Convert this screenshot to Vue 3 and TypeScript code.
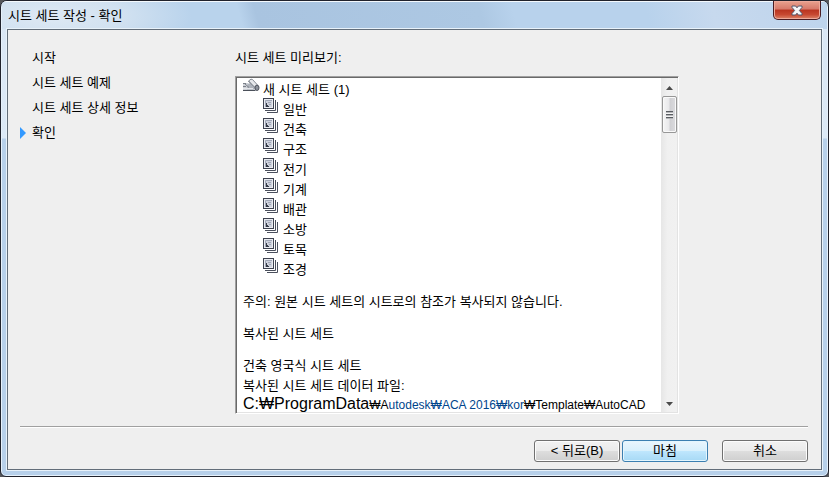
<script setup lang="ts">
import { ref } from 'vue'

interface Step {
  label: string
  current: boolean
}

const steps = ref<Step[]>([
  { label: '시작', current: false },
  { label: '시트 세트 예제', current: false },
  { label: '시트 세트 상세 정보', current: false },
  { label: '확인', current: true },
])

const subsets = ref<string[]>(['일반', '건축', '구조', '전기', '기계', '배관', '소방', '토목', '조경'])
</script>

<template>
  <div class="backdrop">
    <main class="window">
      <header class="titlebar">
        <h1 class="title">시트 세트 작성 - 확인</h1>
        <button class="close" type="button" aria-label="닫기">
          <svg width="12" height="11" viewBox="0 0 12 11" aria-hidden="true">
            <path
              d="M1 1h3.6L6 2.8 7.4 1H11v1.4L8.4 5.5 11 8.6V10H7.4L6 8.2 4.6 10H1V8.6l2.6-3.1L1 2.4z"
              fill="#f6f6f8"
              stroke="#53566b"
              stroke-width="1"
            />
          </svg>
        </button>
      </header>

      <div class="client">
        <div class="content">
          <ol class="steps">
            <li v-for="step in steps" :key="step.label" class="step">
              <span class="marker">
                <svg v-if="step.current" width="7" height="12" viewBox="0 0 7 12" aria-hidden="true">
                  <path d="M0 0l6 6-6 6z" fill="#3399ff" />
                </svg>
              </span>
              <span>{{ step.label }}</span>
            </li>
          </ol>

          <section class="preview">
            <h2 class="preview-label">시트 세트 미리보기:</h2>
            <div class="preview-box">
              <div class="document">
                <div class="row">
                  <svg class="icon" width="17" height="15" viewBox="0 0 17 15" aria-hidden="true">
                    <path d="M0 5h5l8 7H0z" fill="#cfd2d8" />
                    <path d="M5.5 3L8 1.200 9.500 1.500l5 5.500-2 4z" fill="#e6e8eb" stroke="#858a93" />
                    <path d="M4.500 6.500L7 5l5.500 5-2 1.500H4z" fill="#aeb3bb" />
                    <path d="M0 5.500h3M0 8.500h3M1.500 5.500l4.500 4M5.500 3l6.500 6.500" stroke="#7b8089" fill="none" />
                    <path d="M0 10.500h10" stroke="#e4e6ea" fill="none" />
                    <path d="M0 12.500h12.500" stroke="#4b505a" fill="none" />
                    <ellipse cx="14" cy="9.800" rx="2" ry="2.700" fill="#8d929b" stroke="#4b505a" />
                  </svg>
                  <span>새 시트 세트 (1)</span>
                </div>
                <ul class="subsets">
                  <li v-for="name in subsets" :key="name" class="row">
                    <svg class="icon" width="15" height="15" viewBox="0 0 15 15" aria-hidden="true">
                      <path d="M14.500 4v10.500H4" fill="none" stroke="#4a4f5c" />
                      <path d="M12.500 2v10.500H2" fill="none" stroke="#4a4f5c" />
                      <rect x="0.500" y="0.500" width="10" height="10" fill="#e9ebf0" stroke="#3e4350" />
                      <rect x="2" y="2" width="7" height="7" fill="#cdd1dc" />
                      <path d="M2.500 9V2.500H9M5 4.500h3M6 6.500h2" stroke="#a0a6b6" fill="none" />
                      <path d="M3 5h1v2h1v1h1v1H3z" fill="#343947" />
                    </svg>
                    <span>{{ name }}</span>
                  </li>
                </ul>
                <p class="line note">주의: 원본 시트 세트의 시트로의 참조가 복사되지 않습니다.</p>
                <p class="line note">복사된 시트 세트</p>
                <p class="line note">건축 영국식 시트 세트</p>
                <p class="line">복사된 시트 세트 데이터 파일:</p>
                <p class="line path"><span class="root">C:₩ProgramData</span>₩A<span class="linked">utodesk₩ACA 2016₩kor</span>₩Template₩AutoCAD</p>
              </div>
              <div class="scrollbar">
                <button class="arrow" type="button" aria-label="위로 스크롤">
                  <svg width="7" height="4" viewBox="0 0 7 4" aria-hidden="true">
                    <path d="M0 4l3.5-4L7 4z" fill="#4a4a4a" />
                  </svg>
                </button>
                <div class="thumb">
                  <span class="grip"></span>
                </div>
                <button class="arrow down" type="button" aria-label="아래로 스크롤">
                  <svg width="7" height="4" viewBox="0 0 7 4" aria-hidden="true">
                    <path d="M0 0l3.5 4L7 0z" fill="#4a4a4a" />
                  </svg>
                </button>
              </div>
            </div>
          </section>
        </div>

        <footer class="actions">
          <button class="button" type="button">&lt; 뒤로(B)</button>
          <button class="button primary" type="button">마침</button>
          <button class="button cancel" type="button">취소</button>
        </footer>
      </div>
    </main>
  </div>
</template>

<style>
body {
  margin: 0;
}
</style>

<style scoped>
* {
  box-sizing: border-box;
}

.backdrop {
  display: flex;
  min-height: 100vh;
  background: #55565a;
  color: #000;
  font-family: "Liberation Sans", "Noto Sans CJK KR", sans-serif;
  font-size: 13px;
  font-weight: 400;
  line-height: 20px;
}

.window {
  display: flex;
  flex: 1;
  flex-direction: column;
  padding: 0 6px 6px;
  border: 1px solid #20222c;
  border-radius: 7px 7px 6px 6px;
  box-shadow: inset 0 0 0 1px #e6f1fb;
  background:
    linear-gradient(#d9e6f4 0, #dce9f6 137px, transparent 138px),
    #b7d0ea;
  overflow: hidden;
}

.titlebar {
  display: flex;
  justify-content: space-between;
  align-items: flex-start;
  height: 28px;
  margin: 0 -5px;
  padding: 0 6px;
  border-top: 1px solid #f4f9fd;
  background:
    radial-gradient(140px 40px at 50px 14px, rgb(226 235 244 / 90%) 0, rgb(226 235 244 / 60%) 50%, rgb(226 235 244 / 0%) 100%),
    linear-gradient(75deg, #b9d3ec 0, #b9d3ec 29%, #a9c4e0 31%, #adc8e3 58%, #b8d2ec 62%, #b8d2ec 78%, #c7d9ee 86%, #bdd4ec 100%);
}

.title {
  margin: 0;
  padding-top: 4px;
  font-size: 13px;
  font-weight: 400;
}

.close {
  display: flex;
  align-items: center;
  justify-content: center;
  width: 48px;
  height: 19px;
  margin-top: -1px;
  padding: 0;
  border: 1px solid #4a1c22;
  border-top: 0;
  border-radius: 0 0 5px 5px;
  box-shadow: inset 0 0 0 1px #eda99a;
  background: linear-gradient(#e9a28f 0, #d6796a 45%, #b93420 50%, #c74831 75%, #dc8468 100%);
}

.client {
  display: flex;
  flex: 1;
  flex-direction: column;
  padding: 0 13px 7px 12px;
  border: 1px solid #626d79;
  box-shadow: 0 0 0 1px #e8f2fa;
  background: #efefef;
}

.content {
  display: grid;
  flex: 1;
  grid-template-columns: 215px minmax(0, 444px);
  padding-bottom: 12px;
}

.steps {
  margin: 0;
  padding: 15px 0 0;
  list-style: none;
}

.step {
  display: flex;
  align-items: center;
  line-height: 25px;
}

.marker {
  display: flex;
  width: 12px;
}

.preview {
  display: flex;
  flex-direction: column;
}

.preview-label {
  margin: 0;
  padding: 18px 0 8px;
  font-size: 13px;
  font-weight: 400;
}

.preview-box {
  display: flex;
  flex: 1;
  border: 1px solid;
  border-color: #a0a0a0 #fff #fff #a0a0a0;
  box-shadow: inset 1px 1px #696969, inset -1px -1px #e3e3e3;
  padding: 1px 1px 1px 2px;
  background: #fff;
}

.document {
  flex: 1;
  min-width: 0;
  padding: 2px 0 0 5px;
}

.row {
  display: flex;
  align-items: flex-start;
  gap: 3px;
}

.icon {
  margin-top: -2px;
}

.subsets {
  margin: 0;
  padding: 0 0 0 20px;
  list-style: none;
}

.subsets .row {
  gap: 5px;
}

.line {
  margin: 0;
  white-space: nowrap;
}

.line.note {
  margin-top: 12px;
}

.line.path {
  height: 15px;
  font-size: 12px;
  line-height: 16px;
}

.root {
  font-size: 16px;
}

.linked {
  color: #00458c;
}

.scrollbar {
  display: flex;
  flex-direction: column;
  width: 16px;
  padding-top: 1px;
  background: linear-gradient(90deg, #e6e6e6 0, #f0f0f0 40%, #f1f1f1 100%);
}

.arrow {
  display: flex;
  align-items: center;
  justify-content: center;
  height: 17px;
  padding: 0;
  border: 0;
  background: transparent;
}

.arrow.down {
  margin-top: auto;
}

.thumb {
  display: flex;
  align-items: center;
  align-self: flex-end;
  justify-content: center;
  width: 15px;
  height: 37px;
  border: 1px solid #979797;
  border-radius: 2px;
  box-shadow: inset 0 0 0 1px #fafafa;
  background: linear-gradient(90deg, #f5f5f5 0, #e9e9eb 45%, #d0d0d3 55%, #dcdcdf 100%);
}

.grip {
  width: 7px;
  height: 8px;
  background: repeating-linear-gradient(#5a5d62 0, #5a5d62 1px, #b5b6b9 1px, #b5b6b9 2px, #f5f5f5 2px, #f5f5f5 3px);
}

.actions {
  display: flex;
  justify-content: flex-end;
  gap: 2px;
  padding-top: 13px;
  border-top: 1px solid #a0a0a0;
  box-shadow: inset 0 1px #fff;
}

.button {
  width: 86px;
  height: 22px;
  padding: 0;
  border: 1px solid #707070;
  border-radius: 3px;
  box-shadow: inset 0 0 0 1px #fcfcfc;
  background: linear-gradient(#f2f2f2 0, #ebebeb 48%, #dddddd 52%, #cfcfcf 100%);
  color: #000;
  font: inherit;
  line-height: 20px;
}

.button.primary {
  border-color: #3c7fb1;
  box-shadow: inset 0 0 0 1px #e4f6fe;
  background: linear-gradient(#eaf6fd 0, #d9f0fc 48%, #bee6fd 52%, #a7d9f5 100%);
}

.button.cancel {
  margin-left: 12px;
}
</style>
